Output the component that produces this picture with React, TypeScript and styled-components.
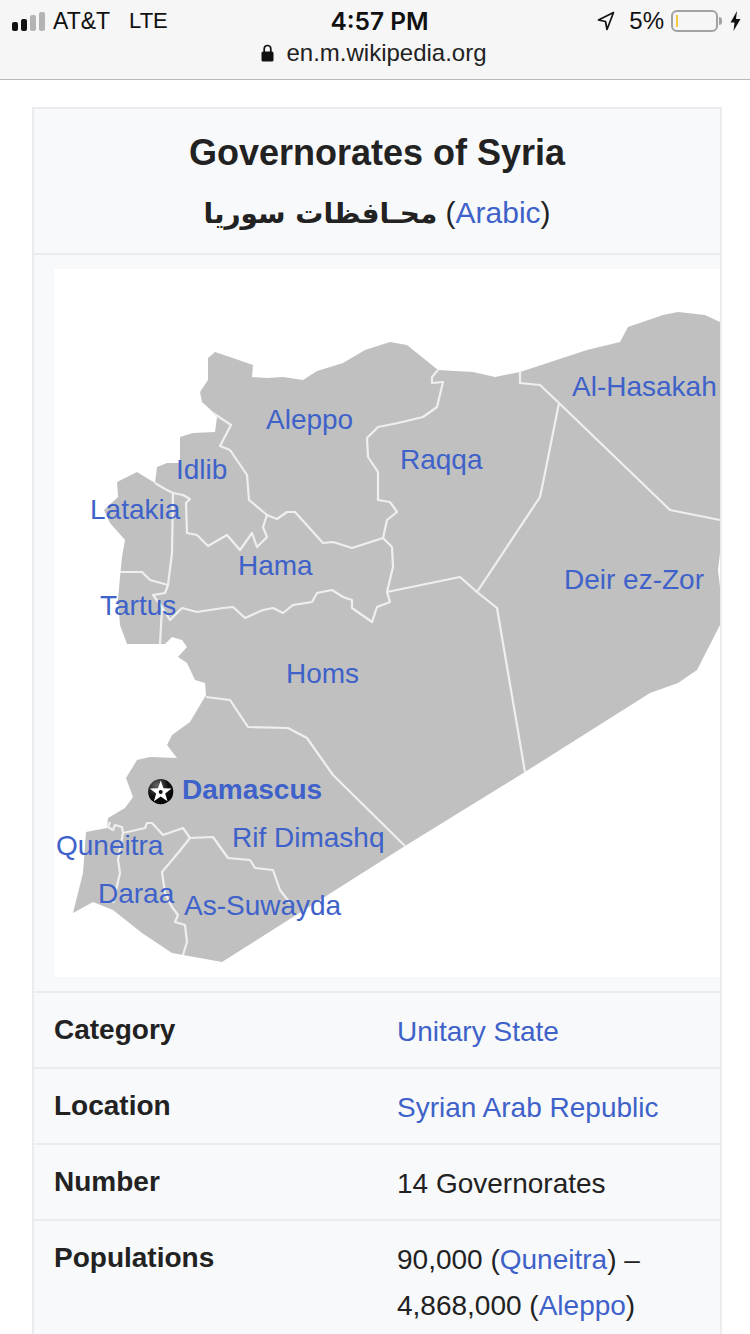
import React from "react";
import styled, { createGlobalStyle } from "styled-components";

const OUTLINE =
  "M215 352 L230 357 L253 365 L252 377 L267 378 L283 377 L303 380 L317 371 L343 363 L365 350 L390 342 L407 345 L438 370 L473 372 L495 377 L520 372 L587 350 L620 342 L628 327 L663 315 L678 312 L705 315 L720 322 L720 553 L718 570 L720 587 L720 625 L697 670 L678 683 L650 693 L525 772 L405 846 L222 962 L183 955 L172 953 L142 933 L113 910 L93 902 L73 913 L83 873 L86 832 L107 828 L108 818 L125 808 L133 797 L126 778 L137 760 L150 757 L177 758 L167 745 L172 735 L190 722 L206 695 L205 683 L195 680 L187 663 L178 657 L187 647 L182 640 L172 637 L165 644 L127 644 L120 625 L118 600 L120 577 L122 557 L125 540 L110 523 L104 510 L118 497 L117 482 L137 472 L155 483 L157 467 L167 463 L180 463 L180 437 L193 433 L215 432 L217 417 L213 412 L202 402 L200 392 L208 380 L208 358 Z";

const BORDERS = [
  // Aleppo
  "M213 413 L231 425 L220 446 L230 450 L247 475 L249 500 L267 515 L277 519 L287 512 L295 512 L323 543 L333 542 L352 548 L383 538",
  "M383 538 L387 520 L397 512 L390 502 L378 500 L378 472 L368 457 L367 438 L378 427 L398 423 L423 417 L437 407 L443 382 L432 383 L432 377 L438 370",
  // Idlib, Latakia, Tartus
  "M267 515 L263 527 L267 537 L257 547 L252 533 L240 550 L227 535 L208 546 L197 535 L187 533 L186 503 L190 499 L183 495 L173 493 L165 489 L155 483",
  "M173 493 L172 553 L168 585",
  "M120 572 L142 572 L150 580 L168 585 L165 593 L153 595 L162 607 L160 644",
  // Hama
  "M162 607 L170 620 L182 608 L197 612 L223 608 L233 607 L245 618 L263 610 L273 608 L283 613 L293 605 L312 602 L317 593 L332 590 L343 597 L352 600 L352 608 L372 622 L377 607 L390 602 L387 592 L393 567 L392 547 L383 538",
  // Homs, Raqqa
  "M387 592 L460 577 L477 592 L497 608 L525 772",
  "M477 592 L540 497 L545 473 L559 403",
  // Al-Hasakah
  "M520 372 L520 383 L540 385 L559 403 L670 510 L720 520",
  // Rif Dimashq
  "M206 697 L230 700 L248 727 L288 728 L307 738 L333 775 L405 846",
  "M190 838 L213 837 L228 858 L250 860 L255 868 L273 870 L280 890 L290 903",
  // As-Suwayda
  "M190 838 L178 853 L162 872 L165 893 L172 907 L178 915 L175 922 L185 925 L187 942 L183 955",
  // Daraa, Quneitra
  "M190 838 L183 828 L163 835 L152 823 L147 823 L145 828 L123 833 L122 827 L115 825 L113 830 L108 827 L110 822",
  "M123 833 L118 860 L120 873 L113 903",
];

// x is the left edge of the name, y its baseline, both on the page
const PLACES = [
  { name: "Aleppo", x: 266, y: 430 },
  { name: "Raqqa", x: 400, y: 470 },
  { name: "Al-Hasakah", x: 572, y: 397 },
  { name: "Idlib", x: 176, y: 480 },
  { name: "Latakia", x: 90, y: 520 },
  { name: "Hama", x: 238, y: 576 },
  { name: "Tartus", x: 100, y: 616 },
  { name: "Deir ez-Zor", x: 564, y: 590 },
  { name: "Homs", x: 286, y: 684 },
  { name: "Damascus", x: 182, y: 800, capital: true },
  { name: "Rif Dimashq", x: 232, y: 848 },
  { name: "Quneitra", x: 56, y: 856 },
  { name: "Daraa", x: 98, y: 904 },
  { name: "As-Suwayda", x: 184, y: 916 },
];

const App: React.FC = () => {
  return (
    <>
      <GlobalStyle />
      <StatusArea>
        <StatusRow>
          <Carrier>
            <Signal>
              <SignalBar $h={9} />
              <SignalBar $h={12} />
              <SignalBar $h={16} $off />
              <SignalBar $h={19} $off />
            </Signal>
            <span>AT&amp;T</span>
            <Network>LTE</Network>
          </Carrier>
          <Clock>4:57 PM</Clock>
          <Power>
            <svg width="18" height="20" viewBox="0 0 18 20">
              <path
                d="M16.5 1.5 L1.5 9 L8.5 10.5 L10 18.5 Z"
                fill="none"
                stroke="#111"
                strokeWidth="1.7"
                strokeLinejoin="round"
              />
            </svg>
            <Percent>5%</Percent>
            <Battery>
              <BatteryLevel />
            </Battery>
            <BatteryNub />
            <svg width="11" height="20" viewBox="0 0 11 20">
              <path d="M7 0 L0.5 11.5 L4.5 11.5 L3.5 20 L10.5 8 L6 8 Z" fill="#111" />
            </svg>
          </Power>
        </StatusRow>
        <AddressRow>
          <svg width="13" height="18" viewBox="0 0 13 18">
            <path
              d="M3.2 8 V4.8 a3.3 3.3 0 0 1 6.6 0 V8"
              fill="none"
              stroke="#111"
              strokeWidth="1.7"
            />
            <rect x="0.5" y="7.5" width="12" height="10" rx="1.6" fill="#111" />
          </svg>
          <span>en.m.wikipedia.org</span>
        </AddressRow>
      </StatusArea>

      <InfoBox>
        <BoxHeader>
          <BoxTitle>Governorates of Syria</BoxTitle>
          <BoxSubtitle>
            <ArabicName lang="ar" dir="rtl">
              محـافظات سوريا
            </ArabicName>{" "}
            (<Link>Arabic</Link>)
          </BoxSubtitle>
        </BoxHeader>

        <MapSection>
          <MapFrame>
            <MapDrawing viewBox="54 269 666 708" width="666" height="708">
              <defs>
                <radialGradient id="capitalDot" cx="35%" cy="25%" r="80%">
                  <stop offset="0%" stopColor="#666" />
                  <stop offset="55%" stopColor="#111" />
                  <stop offset="100%" stopColor="#000" />
                </radialGradient>
              </defs>
              <path d={OUTLINE} fill="#c0c0c0" />
              {BORDERS.map((d) => (
                <path
                  key={d}
                  d={d}
                  fill="none"
                  stroke="#efefef"
                  strokeWidth="2.2"
                  strokeLinejoin="round"
                />
              ))}
              <circle cx="160.7" cy="791.7" r="12.6" fill="url(#capitalDot)" />
              <path
                d="M160.7 780.5 L163.5 788.2 L171.6 788.4 L165.2 793.4 L167.5 801.2 L160.7 796.6 L153.9 801.2 L156.2 793.4 L149.8 788.4 L157.9 788.2 Z"
                fill="#fff"
              />
              <circle cx="160.7" cy="792" r="2" fill="#111" />
            </MapDrawing>
            {PLACES.map((p) => (
              <PlaceName key={p.name} $x={p.x - 54} $y={p.y - 269 - 26} $capital={p.capital}>
                {p.name}
              </PlaceName>
            ))}
          </MapFrame>
        </MapSection>

        <InfoRow>
          <RowLabel>Category</RowLabel>
          <RowValue>
            <Link>Unitary State</Link>
          </RowValue>
        </InfoRow>
        <InfoRow>
          <RowLabel>Location</RowLabel>
          <RowValue>
            <Link>Syrian Arab Republic</Link>
          </RowValue>
        </InfoRow>
        <InfoRow>
          <RowLabel>Number</RowLabel>
          <RowValue>14 Governorates</RowValue>
        </InfoRow>
        <InfoRow $last>
          <RowLabel>Populations</RowLabel>
          <RowValue>
            90,000 (<Link>Quneitra</Link>) –<br />
            4,868,000 (<Link>Aleppo</Link>)
          </RowValue>
        </InfoRow>
      </InfoBox>
    </>
  );
};

const GlobalStyle = createGlobalStyle`
  html, body {
    margin: 0;
    padding: 0;
    height: 1334px;
    overflow: hidden;
    background: #ffffff;
    font-family: "Liberation Sans", Arial, sans-serif;
    color: #222222;
  }
  * {
    box-sizing: border-box;
  }
`;

const StatusArea = styled.header`
  height: 80px;
  padding: 6px 9px 0 12px;
  background: #f6f6f6;
  border-bottom: 1px solid #b8b8b8;
  color: #111111;
`;

const StatusRow = styled.div`
  display: grid;
  grid-template-columns: 1fr auto 1fr;
  align-items: center;
  height: 26px;
  font-size: 24px;
`;

const Carrier = styled.div`
  display: flex;
  align-items: center;
  font-size: 23px;
`;

const Signal = styled.div`
  display: flex;
  align-items: flex-end;
  gap: 3px;
  height: 20px;
  margin-right: 8px;
`;

const SignalBar = styled.i<{ $h: number; $off?: boolean }>`
  display: block;
  width: 6px;
  height: ${(p) => p.$h}px;
  border-radius: 2px;
  background: ${(p) => (p.$off ? "#b4b4b4" : "#111111")};
`;

const Network = styled.span`
  margin-left: 19px;
  font-size: 22px;
`;

const Clock = styled.div`
  font-family: Inter, "Liberation Sans", sans-serif;
  font-weight: 600;
  font-size: 24.5px;
  margin-left: 6px;
`;

const Power = styled.div`
  display: flex;
  align-items: center;
  justify-content: flex-end;
`;

const Percent = styled.span`
  margin: 0 7px 0 14px;
`;

const Battery = styled.div`
  width: 47px;
  height: 22px;
  padding: 3px;
  border: 2px solid #a2a2a2;
  border-radius: 6px;
`;

const BatteryLevel = styled.div`
  width: 2px;
  height: 100%;
  background: #f5c842;
`;

const BatteryNub = styled.div`
  width: 3px;
  height: 8px;
  margin: 0 8px 0 1px;
  background: #a2a2a2;
  border-radius: 0 3px 3px 0;
`;

const AddressRow = styled.div`
  display: flex;
  align-items: center;
  justify-content: center;
  gap: 12px;
  margin-top: 7px;
  margin-left: -5px;
  font-size: 24px;
  color: #222222;
`;

const InfoBox = styled.section`
  width: 690px;
  margin: 27px 0 0 32px;
  background: #f8f9fa;
  border: 2px solid #eaecf0;
`;

const BoxHeader = styled.div`
  height: 144px;
  padding-top: 22px;
  text-align: center;
`;

const BoxTitle = styled.h1`
  margin: 0;
  font-size: 36px;
  line-height: 44px;
  font-weight: 700;
  color: #222222;
`;

const BoxSubtitle = styled.div`
  margin-top: 18px;
  font-size: 30px;
  line-height: 40px;
`;

const ArabicName = styled.span`
  font-family: "DejaVu Sans", sans-serif;
  font-weight: 700;
  font-size: 28px;
`;

const Link = styled.a`
  color: #3e62c9;
`;

const MapSection = styled.div`
  padding: 14px 0 14px 20px;
  border-top: 2px solid #eaecf0;
`;

const MapFrame = styled.div`
  position: relative;
  height: 708px;
  background: #ffffff;
  overflow: hidden;
`;

const MapDrawing = styled.svg`
  display: block;
  filter: blur(0.5px);
`;

const PlaceName = styled.span<{ $x: number; $y: number; $capital?: boolean }>`
  position: absolute;
  left: ${(p) => p.$x}px;
  top: ${(p) => p.$y}px;
  font-size: 28px;
  line-height: 32px;
  font-weight: ${(p) => (p.$capital ? 700 : 400)};
  color: #3e62c9;
  white-space: nowrap;
`;

const InfoRow = styled.div<{ $last?: boolean }>`
  display: grid;
  grid-template-columns: 343px 1fr;
  padding: 0 20px;
  min-height: ${(p) => (p.$last ? 160 : 76)}px;
  border-top: 2px solid #eaecf0;
`;

const RowLabel = styled.div`
  padding-top: 17px;
  font-size: 28px;
  line-height: 40px;
  font-weight: 700;
  color: #222222;
`;

const RowValue = styled.div`
  padding-top: 16px;
  font-size: 28px;
  line-height: 46px;
  color: #222222;
`;

export default App;
